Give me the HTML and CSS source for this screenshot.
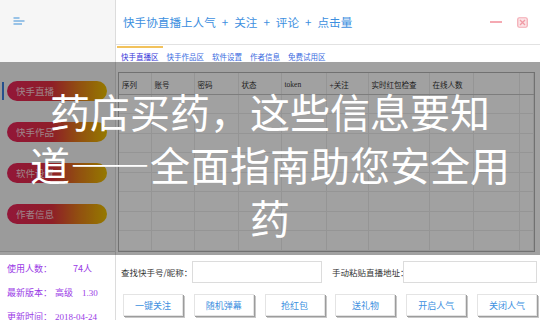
FILE: index.html
```html
<!DOCTYPE html>
<html lang="zh-CN">
<head>
<meta charset="utf-8">
<title>快手协直播上人气</title>
<link rel="stylesheet" href="styles.css">
</head>
<body>
<div class="app">
  <aside class="side">
    <div class="side-top">
      <svg class="menu-icon" width="12" height="8" viewBox="0 0 12 8"><path d="M0.5 1H6.5M0.5 4H11.5M0.5 7H9" stroke="#3c8fd8" stroke-width="1.2" fill="none"/></svg>
    </div>
    <nav class="menu">
      <a class="pill active">快手直播</a>
      <a class="pill">快手作品</a>
      <a class="pill">软件设置</a>
      <a class="pill">作者信息</a>
    </nav>
    <div class="info">
      <div class="info-row"><span class="k">使用人数：</span><span class="count">74人</span></div>
      <div class="info-row"><span class="k">最新版本：</span><span>高级</span><span class="num ver">1.30</span></div>
      <div class="info-row"><span class="k">更新时间：</span><span class="num">2018-04-24</span></div>
    </div>
  </aside>
  <main class="main">
    <header class="titlebar">
      <h1 class="title">快手协直播上人气<span class="plus">+</span>关注<span class="plus">+</span>评论<span class="plus">+</span>点击量</h1>
      <div class="win-ctrl">
        <span class="min"></span>
        <svg class="close" width="11" height="11" viewBox="0 0 11 11"><rect x="0.75" y="0.75" width="9.5" height="9.5" rx="1.5" fill="#fbe3e6" stroke="#f4a9b2" stroke-width="1.2"/><path d="M3 3L8 8M8 3L3 8" stroke="#f09aa5" stroke-width="1.3"/></svg>
      </div>
    </header>
    <nav class="tabs">
      <a class="tab active">快手直播区</a>
      <a class="tab">快手作品区</a>
      <a class="tab">软件设置</a>
      <a class="tab">作者信息</a>
      <a class="tab">免费试用区</a>
    </nav>
    <div class="grid-wrap">
      <table class="grid">
        <colgroup>
          <col class="c1"><col class="c2"><col class="c3"><col class="c4"><col class="c5"><col class="c6"><col class="c7"><col class="c8"><col class="c9"><col>
        </colgroup>
        <thead>
          <tr><th>序列</th><th>账号</th><th>密码</th><th>状态</th><th>token</th><th>+关注</th><th>实时红包检查</th><th>在线人数</th><th></th><th></th></tr>
        </thead>
        <tbody>
          <tr><td></td><td></td><td></td><td></td><td></td><td></td><td></td><td></td><td></td><td></td></tr>
          <tr><td></td><td></td><td></td><td></td><td></td><td></td><td></td><td></td><td></td><td></td></tr>
          <tr><td></td><td></td><td></td><td></td><td></td><td></td><td></td><td></td><td></td><td></td></tr>
          <tr><td></td><td></td><td></td><td></td><td></td><td></td><td></td><td></td><td></td><td></td></tr>
          <tr><td></td><td></td><td></td><td></td><td></td><td></td><td></td><td></td><td></td><td></td></tr>
          <tr><td></td><td></td><td></td><td></td><td></td><td></td><td></td><td></td><td></td><td></td></tr>
          <tr><td></td><td></td><td></td><td></td><td></td><td></td><td></td><td></td><td></td><td></td></tr>
          <tr><td></td><td></td><td></td><td></td><td></td><td></td><td></td><td></td><td></td><td></td></tr>
        </tbody>
      </table>
    </div>
    <div class="search-row">
      <label class="label">查找快手号/昵称：</label>
      <input class="field field-a" type="text">
      <label class="label label-b">手动粘贴直播地址：</label>
      <input class="field field-b" type="text">
    </div>
    <div class="btn-row">
      <button class="btn">一键关注</button>
      <button class="btn">随机弹幕</button>
      <button class="btn">抢红包</button>
      <button class="btn">送礼物</button>
      <button class="btn">开启人气</button>
      <button class="btn">关闭人气</button>
    </div>
  </main>
  <div class="overlay">
    <p class="headline">药店买药，这些信息要知<br>道——全面指南助您安全用<br>药</p>
  </div>
</div>
</body>
</html>
```
FILE: styles.css
```css
* { box-sizing: border-box; }
body {
  margin: 0;
  width: 540px;
  height: 320px;
  overflow: hidden;
  font-family: "Noto Sans CJK SC", "Noto Sans", sans-serif;
  background: #fff;
}
.app {
  position: relative;
  display: grid;
  grid-template-columns: 116px 1fr;
  height: 320px;
  background: #fff;
}

/* sidebar */
.side {
  background: #f6f6f6;
  border-right: 1px solid #dcdcdc;
  display: flex;
  flex-direction: column;
}
.side-top {
  height: 62px;
  padding: 17px 0 0 13px;
}
.menu-icon { display: block; }
.menu {
  height: 190px;
  padding-top: 19px;
  display: flex;
  flex-direction: column;
  gap: 21px;
  border-bottom: 1px solid #d6d6d6;
}
.pill {
  position: relative;
  display: block;
  margin-left: 7px;
  width: 100px;
  height: 20px;
  border-radius: 10px;
  background: linear-gradient(90deg, #e8245a 0%, #e2303f 45%, #e67a1c 70%, #ecc000 100%);
  color: rgba(255, 240, 244, 0.85);
  font-size: 9.5px;
  line-height: 20px;
  padding-left: 9px;
}
.pill.active::before {
  content: "";
  position: absolute;
  left: -5px;
  top: 1px;
  bottom: 1px;
  width: 1.5px;
  background: #3c7fe0;
}
.info {
  flex: 1;
  background: #fff;
  padding: 5px 0 0 7px;
  font-size: 9px;
  color: #9a3be6;
}
.info-row {
  display: flex;
  height: 24px;
  line-height: 24px;
}
.k { width: 48px; }
.count { margin-left: 18px; }
.num { font-family: "Liberation Serif", serif; font-size: 9px; }
.ver { margin-left: 9px; }

/* main */
.main {
  display: flex;
  flex-direction: column;
  min-width: 0;
}
.titlebar {
  height: 45px;
  border-bottom: 1px solid #e2e2e2;
  display: flex;
  align-items: center;
  padding: 0 12px 0 7px;
}
.title {
  flex: 1;
  margin: 0;
  font-size: 11.6px;
  font-weight: 400;
  color: #3d8fe0;
  white-space: nowrap;
}
.plus { padding: 0 6px; }
.win-ctrl {
  display: flex;
  align-items: center;
  gap: 15px;
}
.min {
  display: block;
  width: 12px;
  height: 2px;
  background: #f5a9b2;
}
.close { display: block; }

.tabs {
  height: 20px;
  display: flex;
  padding-left: 1px;
  font-size: 7.5px;
}
.tab {
  padding: 0 4px;
  margin-top: 1px;
  border-top: 2px solid transparent;
  line-height: 17px;
  color: #3a6be0;
  white-space: nowrap;
}
.tab.active {
  border-top-color: #f2c25c;
  color: #3434d8;
}

.grid-wrap {
  margin: 7px 5px 0 2px;
  height: 180px;
  border: 1px solid #b4b4b4;
  overflow: hidden;
  background: #fff;
}
.grid {
  width: 100%;
  border-collapse: collapse;
  table-layout: fixed;
  font-family: "Liberation Serif", "Noto Sans CJK SC", serif;
  font-size: 7.5px;
  color: #333;
}
.c1 { width: 32px; }
.c2 { width: 43px; }
.c3 { width: 44px; }
.c4 { width: 43px; }
.c5 { width: 45px; }
.c6 { width: 42px; }
.c7 { width: 61px; }
.c8 { width: 44px; }
.c9 { width: 46px; }
.grid th {
  height: 21px;
  padding: 3px 0 0 3px;
  font-weight: 400;
  text-align: left;
  white-space: nowrap;
  border-right: 1px solid #ececec;
  border-bottom: 1px solid #c6c6c6;
}
.grid td {
  height: 19.5px;
  border-right: 1px solid #ececec;
  border-bottom: 1px solid #ececec;
}

.search-row {
  display: flex;
  align-items: center;
  height: 22px;
  margin: 9px 3px 0 5px;
  font-size: 8.5px;
  color: #333;
}
.label { width: 71px; white-space: nowrap; }
.label-b { margin-left: 10px; }
.field {
  height: 22px;
  border: 1px solid #dcdcdc;
  background: #fff;
  margin: 0;
  padding: 0;
}
.field-a { width: 130px; }
.field-b { flex: 1; min-width: 0; }

.btn-row {
  display: flex;
  justify-content: space-between;
  margin: 11px 3px 0 7px;
}
.btn {
  width: 60px;
  height: 22px;
  padding: 0;
  background: #fff;
  border: 1px solid #e4e4e4;
  box-shadow: 1px 1px 0 #9c9c9c, 2px 2px 0 #c8c8c8;
  color: #3d8fe0;
  font-family: "Noto Sans CJK SC", sans-serif;
  font-size: 9px;
}

/* overlay banner */
.overlay {
  position: absolute;
  left: 0;
  right: 0;
  top: 62px;
  height: 193px;
  background: rgba(0, 0, 0, 0.37);
  padding-top: 23px;
}
.headline {
  margin: 0;
  color: #fff;
  font-size: 40px;
  line-height: 53px;
  text-align: center;
  white-space: nowrap;
}
```
